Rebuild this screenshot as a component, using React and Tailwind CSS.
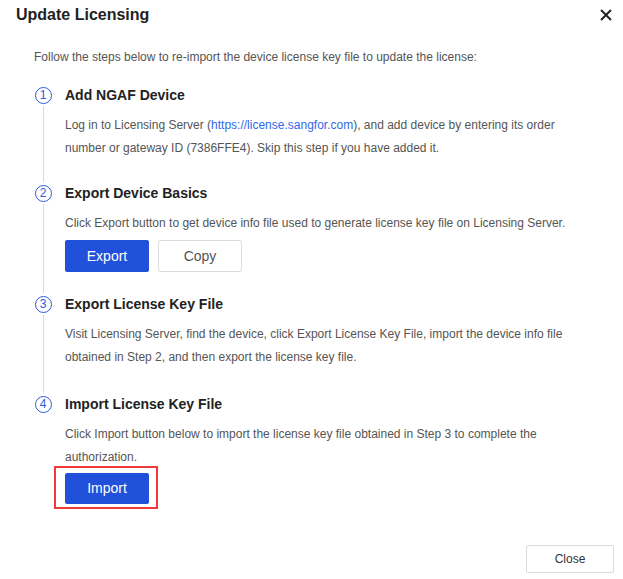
import React from "react";

const Step = ({ n, title, last, pb = "pb-6", children }) => (
  <div className="flex">
    <div className="flex w-[18px] flex-col items-center">
      <div className="mt-[2.5px] flex h-[17px] w-[17px] shrink-0 items-center justify-center rounded-full border border-[#2d5bdc] text-[12px] leading-none text-[#2d5bdc]">
        {n}
      </div>
      {!last && <div className="mt-[2px] w-px flex-1 bg-[#d9d9d9]" />}
    </div>
    <div className={`ml-[13px] flex-1 ${last ? "" : pb}`}>
      <div className="h-[22px] text-[14px] font-bold leading-[22px] text-[#222]">{title}</div>
      {children}
    </div>
  </div>
);

const Body = ({ children }) => (
  <p className="mt-[8px] pr-[50px] text-[12px] leading-[23px] text-[#555]">{children}</p>
);

export default function App() {
  return (
    <div
      className="relative h-[579px] w-[623px] bg-white"
      style={{ fontFamily: '"Liberation Sans", Arial, sans-serif' }}
    >
      <div className="flex h-[30px] items-center justify-between pl-4 pr-[11px]">
        <h2 className="text-[16px] font-bold text-[#222]">Update Licensing</h2>
        <svg width="12" height="12" viewBox="0 0 12 12" className="text-[#222]">
          <path d="M1 1L11 11M11 1L1 11" stroke="currentColor" strokeWidth="2" />
        </svg>
      </div>

      <div className="pl-[34px]">
        <p className="mt-[19px] text-[12px] leading-4 text-[#555]">
          Follow the steps below to re-import the device license key file to update the license:
        </p>

        <div className="mt-[19px]">
          <Step n="1" title="Add NGAF Device" pb="pb-[22px]">
            <Body>
              Log in to Licensing Server (<span className="text-[#2f6ae8]">https://license.sangfor.com</span>), and add device by entering its order number or gateway ID (7386FFE4). Skip this step if you have added it.
            </Body>
          </Step>
          <Step n="2" title="Export Device Basics" pb="pb-[21px]">
            <Body>Click Export button to get device info file used to generate license key file on Licensing Server.</Body>
            <div className="mt-[5px] flex gap-[9px]">
              <button className="h-8 w-[84px] rounded-[2px] bg-[#2150db] text-[14px] text-white">Export</button>
              <button className="h-8 w-[84px] rounded-[2px] border border-[#dcdcdc] bg-white text-[14px] text-[#555]">
                Copy
              </button>
            </div>
          </Step>
          <Step n="3" title="Export License Key File">
            <Body>
              Visit Licensing Server, find the device, click Export License Key File, import the device info file
              obtained in Step 2, and then export the license key file.
            </Body>
          </Step>
          <Step n="4" title="Import License Key File" last>
            <Body>
              Click Import button below to import the license key file obtained in Step 3 to complete the
              authorization.
            </Body>
            <div className="relative mt-[4px] inline-block">
              <button className="h-[31px] w-[84px] rounded-[2px] bg-[#2150db] text-[14px] text-white">Import</button>
              <div className="absolute -bottom-[5px] -left-[11px] -right-[9px] -top-[7px] border-2 border-[#f03a3a]" />
            </div>
          </Step>
        </div>
      </div>

      <div className="absolute bottom-[6px] right-[9px]">
        <button className="h-7 w-[88px] rounded-[2px] border border-[#dcdcdc] bg-white text-[12px] text-[#333]">
          Close
        </button>
      </div>
    </div>
  );
}
